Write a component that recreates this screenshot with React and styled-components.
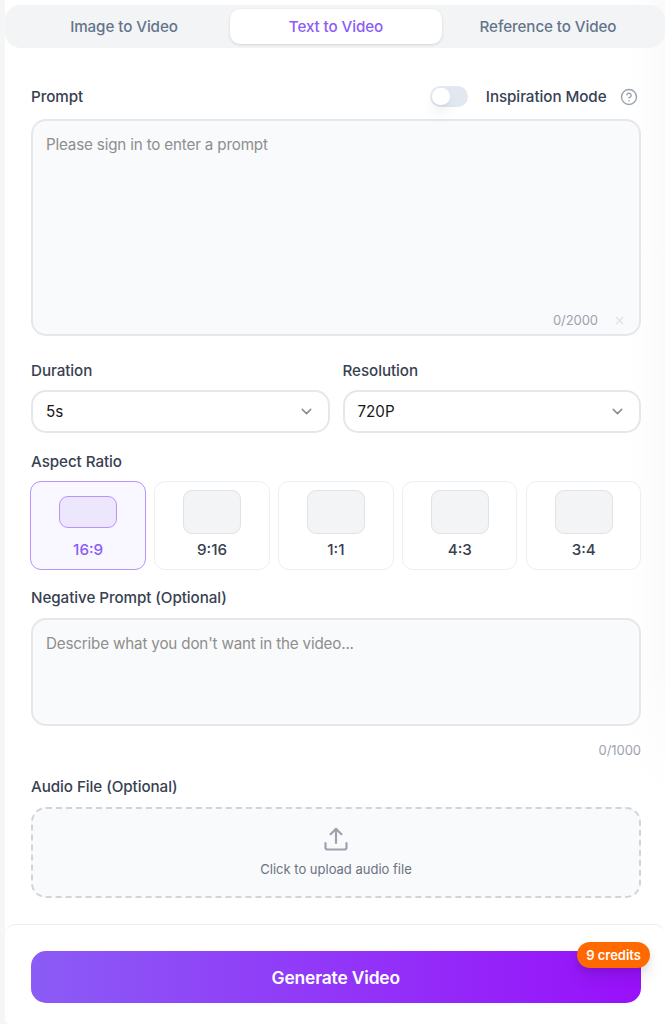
import { useState } from "react";
import styled, { createGlobalStyle } from "styled-components";
import { ChevronDown, CircleQuestionMark, X } from "lucide-react";

const tabs = ["Image to Video", "Text to Video", "Reference to Video"];

const ratios = [
  { label: "16:9", height: 32 },
  { label: "9:16", height: 44 },
  { label: "1:1", height: 44 },
  { label: "4:3", height: 43.5 },
  { label: "3:4", height: 44 },
];

const App = () => {
  const [activeTab, setActiveTab] = useState("Text to Video");
  const [ratio, setRatio] = useState("16:9");

  return (
    <>
      <GlobalStyle />
      <Page>
        <Panel>
          <Tabs>
            {tabs.map((tab) => (
              <Tab
                key={tab}
                $active={tab === activeTab}
                onClick={() => setActiveTab(tab)}
              >
                {tab}
              </Tab>
            ))}
          </Tabs>

          <Form>
            <PromptHeader>
              <Label>Prompt</Label>
              <Inspiration>
                <Switch>
                  <Knob />
                </Switch>
                <Label>Inspiration Mode</Label>
                <CircleQuestionMark size={18} strokeWidth={1.9} />
              </Inspiration>
            </PromptHeader>
            <PromptBox>
              <Placeholder>Please sign in to enter a prompt</Placeholder>
              <PromptFooter>
                <Counter>0/2000</Counter>
                <X size={13} strokeWidth={2} color="#dcdfe3" />
              </PromptFooter>
            </PromptBox>

            <Selects>
              <div>
                <Label>Duration</Label>
                <Select>
                  5s
                  <ChevronDown size={17} strokeWidth={2} />
                </Select>
              </div>
              <div>
                <Label>Resolution</Label>
                <Select>
                  720P
                  <ChevronDown size={17} strokeWidth={2} />
                </Select>
              </div>
            </Selects>

            <Label>Aspect Ratio</Label>
            <Ratios>
              {ratios.map((item) => (
                <Ratio
                  key={item.label}
                  $active={item.label === ratio}
                  onClick={() => setRatio(item.label)}
                >
                  <Shape>
                    <ShapeBox
                      $height={item.height}
                      $active={item.label === ratio}
                    />
                  </Shape>
                  {item.label}
                </Ratio>
              ))}
            </Ratios>

            <Label>Negative Prompt (Optional)</Label>
            <NegativeBox>
              <Placeholder>
                Describe what you don't want in the video...
              </Placeholder>
            </NegativeBox>
            <NegativeCounter>0/1000</NegativeCounter>

            <Label>Audio File (Optional)</Label>
            <Upload>
              <UploadIcon viewBox="0 0 26 26">
                <path d="M2.5 17v4.5a2 2 0 0 0 2 2h17a2 2 0 0 0 2-2v-4.5" />
                <path d="M13 17V3" />
                <path d="M7.6 8.2 13 2.8l5.4 5.4" />
              </UploadIcon>
              Click to upload audio file
            </Upload>
          </Form>

          <Footer>
            <Generate>
              Generate Video
              <Badge>9 credits</Badge>
            </Generate>
          </Footer>
        </Panel>
      </Page>
    </>
  );
};

export default App;

const GlobalStyle = createGlobalStyle`
  * {
    box-sizing: border-box;
  }
  body {
    margin: 0;
    overflow: hidden;
    font-family: Inter, "Liberation Sans", sans-serif;
    -webkit-font-smoothing: antialiased;
  }
  button {
    font-family: inherit;
    border: none;
    cursor: pointer;
  }
`;

const Page = styled.div`
  height: 1024px;
  padding-left: 5px;
  background: #f6f6f6;
  overflow: hidden;
`;

/* the right edge fades to grey and the fade dies out near the bottom */
const Panel = styled.div`
  height: 1024px;
  display: flex;
  flex-direction: column;
  padding-top: 5px;
  border-bottom-left-radius: 6px;
  background: linear-gradient(to bottom, rgba(255, 255, 255, 0) 660px, #fff 800px),
    linear-gradient(to right, #fff 0, #fff 625px, #fdfdfd 640px, #fafafa 660px);
`;

const Tabs = styled.div`
  height: 43px;
  flex: none;
  display: grid;
  grid-template-columns: repeat(3, 1fr);
  padding: 4px 11px 4px 13px;
  border-radius: 15px;
  background: #f3f4f6;
`;

const Tab = styled.button`
  padding: 0;
  border-radius: 10px;
  font-size: 15.2px;
  letter-spacing: -0.09px;
  font-weight: 500;
  color: ${({ $active }) => ($active ? "#8b5cf6" : "#64748b")};
  background: ${({ $active }) => ($active ? "#fff" : "transparent")};
  box-shadow: ${({ $active }) =>
    $active ? "0 1px 3px rgba(0, 0, 0, 0.14)" : "none"};
`;

const Form = styled.div`
  flex: none;
  height: 876px;
  padding: 38px 24px 0 26px;
`;

const Label = styled.div`
  font-size: 15.2px;
  line-height: 22px;
  letter-spacing: -0.07px;
  font-weight: 500;
  color: #374151;
`;

const PromptHeader = styled.div`
  height: 33px;
  display: flex;
  justify-content: space-between;
  align-items: flex-start;
`;

const Inspiration = styled.div`
  display: flex;
  align-items: center;
  padding-right: 3.5px;
  color: #9ca3af;

  svg {
    margin-left: 13px;
  }
`;

const Switch = styled.div`
  width: 38px;
  height: 21px;
  margin: -2px 17.5px 0 0;
  padding: 2px;
  border-radius: 11px;
  background: #e2e8f0;
`;

const Knob = styled.div`
  width: 17.5px;
  height: 17.5px;
  border-radius: 50%;
  background: #fff;
  box-shadow: 0 10px 14px -2px rgba(0, 0, 0, 0.09), 0 3px 5px -3px rgba(0, 0, 0, 0.08);
`;

const Box = styled.div`
  border: 2px solid #e5e7eb;
  border-radius: 15px;
  background: #f9fafb;
`;

const PromptBox = styled(Box)`
  height: 217px;
  display: flex;
  flex-direction: column;
  justify-content: space-between;
  padding: 13px 13px 4px;
`;

const Placeholder = styled.div`
  font-size: 15.2px;
  line-height: 22px;
  letter-spacing: -0.17px;
  color: #8e8e8e;
`;

const PromptFooter = styled.div`
  display: flex;
  justify-content: flex-end;
  align-items: center;
  gap: 15px;
`;

const Counter = styled.div`
  font-size: 13px;
  line-height: 20px;
  letter-spacing: -0.05px;
  color: #9ca3af;
`;

const Selects = styled.div`
  display: grid;
  grid-template-columns: 1fr 1fr;
  gap: 13px;
  padding: 24px 0 18px;
`;

const Select = styled.div`
  height: 43px;
  margin-top: 8px;
  display: flex;
  justify-content: space-between;
  align-items: center;
  padding: 0 13px;
  border: 2px solid #e5e7eb;
  border-radius: 15px;
  background: #fff;
  font-size: 15.2px;
  color: #171717;

  svg {
    color: #8b8b8b;
  }
`;

const Ratios = styled.div`
  display: grid;
  grid-template-columns: repeat(5, 1fr);
  gap: 8.5px;
  margin: 8px -0.4px 17px -0.6px;
`;

const Ratio = styled.button`
  height: 89px;
  display: flex;
  flex-direction: column;
  align-items: center;
  padding: 8px 0 0;
  border: 1px solid ${({ $active }) => ($active ? "#b794fb" : "#eeeff2")};
  border-radius: 11px;
  background: ${({ $active }) => ($active ? "#f9f7ff" : "#fff")};
  font-size: 15.2px;
  line-height: 22px;
  font-weight: 500;
  color: ${({ $active }) => ($active ? "#8b5cf6" : "#374151")};
`;

const Shape = styled.div`
  height: 44px;
  display: flex;
  align-items: center;
  margin-bottom: 5px;
`;

const ShapeBox = styled.div`
  width: 58px;
  height: ${({ $height }) => $height}px;
  border: 1px solid ${({ $active }) => ($active ? "#b794fb" : "#dfe2e7")};
  border-radius: 9px;
  background: ${({ $active }) => ($active ? "#ede7fe" : "#f3f4f6")};
`;

const NegativeBox = styled(Box)`
  height: 108px;
  margin-top: 9px;
  padding: 13px;
`;

const NegativeCounter = styled(Counter)`
  margin: 14px 0 16px;
  text-align: right;
`;

const Upload = styled.div`
  height: 91px;
  margin-top: 9px;
  display: flex;
  flex-direction: column;
  align-items: center;
  padding-top: 17px;
  border: 2px dashed #d1d5db;
  border-radius: 15px;
  background: #f9fafb;
  font-size: 13px;
  line-height: 18px;
  color: #6b7280;
`;

const UploadIcon = styled.svg`
  width: 26px;
  height: 26px;
  margin-bottom: 8px;
  fill: none;
  stroke: #9ca3af;
  stroke-width: 2.2;
  stroke-linecap: round;
  stroke-linejoin: round;
`;

const Footer = styled.div`
  flex: 1;
  padding: 26px 24px 0 25.5px;
  border-top: 1px solid #edeef0;
  border-radius: 11px 11px 0 6px;
  background: #fff;
`;

const Generate = styled.button`
  position: relative;
  width: 100%;
  height: 52px;
  padding: 0;
  border-radius: 15px;
  background: linear-gradient(to right, #8b5cf6, #9810fa);
  font-size: 17.4px;
  letter-spacing: -0.16px;
  font-weight: 600;
  color: #fff;
`;

const Badge = styled.span`
  position: absolute;
  top: -9px;
  right: -9px;
  height: 26px;
  padding: 0 9px;
  border-radius: 13px;
  background: #ff6900;
  font-size: 13px;
  line-height: 27px;
  letter-spacing: 0;
  font-weight: 600;
  box-shadow: 0 10px 16px rgba(0, 0, 0, 0.08), 0 4px 6px rgba(0, 0, 0, 0.08);
`;
